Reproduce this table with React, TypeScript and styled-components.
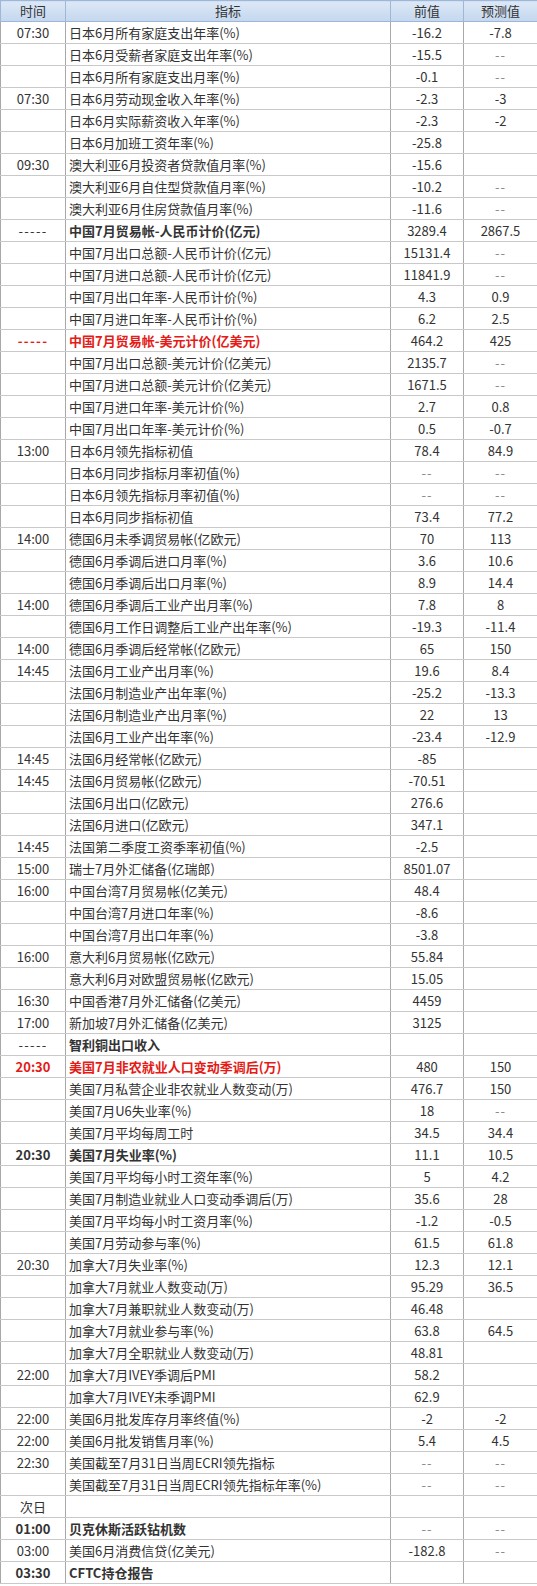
import React from "react";
import styled, { createGlobalStyle, css } from "styled-components";

const Global = createGlobalStyle`
  html, body { margin: 0; padding: 0; background: #fff; }
  body { font-family: "Noto Sans CJK SC", "Noto Sans", sans-serif; }
`;

type Tone = "normal" | "bold" | "red";
type Row = {
  t: string;
  n: string;
  p: string;
  f: string;
  tt?: Tone; // time tone
  nt?: Tone; // name tone
};

const rows: Row[] = [
  { t: "07:30", n: "日本6月所有家庭支出年率(%)", p: "-16.2", f: "-7.8" },
  { t: "", n: "日本6月受薪者家庭支出年率(%)", p: "-15.5", f: "--" },
  { t: "", n: "日本6月所有家庭支出月率(%)", p: "-0.1", f: "--" },
  { t: "07:30", n: "日本6月劳动现金收入年率(%)", p: "-2.3", f: "-3" },
  { t: "", n: "日本6月实际薪资收入年率(%)", p: "-2.3", f: "-2" },
  { t: "", n: "日本6月加班工资年率(%)", p: "-25.8", f: "" },
  { t: "09:30", n: "澳大利亚6月投资者贷款值月率(%)", p: "-15.6", f: "" },
  { t: "", n: "澳大利亚6月自住型贷款值月率(%)", p: "-10.2", f: "--" },
  { t: "", n: "澳大利亚6月住房贷款值月率(%)", p: "-11.6", f: "--" },
  { t: "-----", n: "中国7月贸易帐-人民币计价(亿元)", p: "3289.4", f: "2867.5", nt: "bold" },
  { t: "", n: "中国7月出口总额-人民币计价(亿元)", p: "15131.4", f: "--" },
  { t: "", n: "中国7月进口总额-人民币计价(亿元)", p: "11841.9", f: "--" },
  { t: "", n: "中国7月出口年率-人民币计价(%)", p: "4.3", f: "0.9" },
  { t: "", n: "中国7月进口年率-人民币计价(%)", p: "6.2", f: "2.5" },
  { t: "-----", n: "中国7月贸易帐-美元计价(亿美元)", p: "464.2", f: "425", tt: "red", nt: "red" },
  { t: "", n: "中国7月出口总额-美元计价(亿美元)", p: "2135.7", f: "--" },
  { t: "", n: "中国7月进口总额-美元计价(亿美元)", p: "1671.5", f: "--" },
  { t: "", n: "中国7月进口年率-美元计价(%)", p: "2.7", f: "0.8" },
  { t: "", n: "中国7月出口年率-美元计价(%)", p: "0.5", f: "-0.7" },
  { t: "13:00", n: "日本6月领先指标初值", p: "78.4", f: "84.9" },
  { t: "", n: "日本6月同步指标月率初值(%)", p: "--", f: "--" },
  { t: "", n: "日本6月领先指标月率初值(%)", p: "--", f: "--" },
  { t: "", n: "日本6月同步指标初值", p: "73.4", f: "77.2" },
  { t: "14:00", n: "德国6月未季调贸易帐(亿欧元)", p: "70", f: "113" },
  { t: "", n: "德国6月季调后进口月率(%)", p: "3.6", f: "10.6" },
  { t: "", n: "德国6月季调后出口月率(%)", p: "8.9", f: "14.4" },
  { t: "14:00", n: "德国6月季调后工业产出月率(%)", p: "7.8", f: "8" },
  { t: "", n: "德国6月工作日调整后工业产出年率(%)", p: "-19.3", f: "-11.4" },
  { t: "14:00", n: "德国6月季调后经常帐(亿欧元)", p: "65", f: "150" },
  { t: "14:45", n: "法国6月工业产出月率(%)", p: "19.6", f: "8.4" },
  { t: "", n: "法国6月制造业产出年率(%)", p: "-25.2", f: "-13.3" },
  { t: "", n: "法国6月制造业产出月率(%)", p: "22", f: "13" },
  { t: "", n: "法国6月工业产出年率(%)", p: "-23.4", f: "-12.9" },
  { t: "14:45", n: "法国6月经常帐(亿欧元)", p: "-85", f: "" },
  { t: "14:45", n: "法国6月贸易帐(亿欧元)", p: "-70.51", f: "" },
  { t: "", n: "法国6月出口(亿欧元)", p: "276.6", f: "" },
  { t: "", n: "法国6月进口(亿欧元)", p: "347.1", f: "" },
  { t: "14:45", n: "法国第二季度工资季率初值(%)", p: "-2.5", f: "" },
  { t: "15:00", n: "瑞士7月外汇储备(亿瑞郎)", p: "8501.07", f: "" },
  { t: "16:00", n: "中国台湾7月贸易帐(亿美元)", p: "48.4", f: "" },
  { t: "", n: "中国台湾7月进口年率(%)", p: "-8.6", f: "" },
  { t: "", n: "中国台湾7月出口年率(%)", p: "-3.8", f: "" },
  { t: "16:00", n: "意大利6月贸易帐(亿欧元)", p: "55.84", f: "" },
  { t: "", n: "意大利6月对欧盟贸易帐(亿欧元)", p: "15.05", f: "" },
  { t: "16:30", n: "中国香港7月外汇储备(亿美元)", p: "4459", f: "" },
  { t: "17:00", n: "新加坡7月外汇储备(亿美元)", p: "3125", f: "" },
  { t: "-----", n: "智利铜出口收入", p: "", f: "", nt: "bold" },
  { t: "20:30", n: "美国7月非农就业人口变动季调后(万)", p: "480", f: "150", tt: "red", nt: "red" },
  { t: "", n: "美国7月私营企业非农就业人数变动(万)", p: "476.7", f: "150" },
  { t: "", n: "美国7月U6失业率(%)", p: "18", f: "--" },
  { t: "", n: "美国7月平均每周工时", p: "34.5", f: "34.4" },
  { t: "20:30", n: "美国7月失业率(%)", p: "11.1", f: "10.5", tt: "bold", nt: "bold" },
  { t: "", n: "美国7月平均每小时工资年率(%)", p: "5", f: "4.2" },
  { t: "", n: "美国7月制造业就业人口变动季调后(万)", p: "35.6", f: "28" },
  { t: "", n: "美国7月平均每小时工资月率(%)", p: "-1.2", f: "-0.5" },
  { t: "", n: "美国7月劳动参与率(%)", p: "61.5", f: "61.8" },
  { t: "20:30", n: "加拿大7月失业率(%)", p: "12.3", f: "12.1" },
  { t: "", n: "加拿大7月就业人数变动(万)", p: "95.29", f: "36.5" },
  { t: "", n: "加拿大7月兼职就业人数变动(万)", p: "46.48", f: "" },
  { t: "", n: "加拿大7月就业参与率(%)", p: "63.8", f: "64.5" },
  { t: "", n: "加拿大7月全职就业人数变动(万)", p: "48.81", f: "" },
  { t: "22:00", n: "加拿大7月IVEY季调后PMI", p: "58.2", f: "" },
  { t: "", n: "加拿大7月IVEY未季调PMI", p: "62.9", f: "" },
  { t: "22:00", n: "美国6月批发库存月率终值(%)", p: "-2", f: "-2" },
  { t: "22:00", n: "美国6月批发销售月率(%)", p: "5.4", f: "4.5" },
  { t: "22:30", n: "美国截至7月31日当周ECRI领先指标", p: "--", f: "--" },
  { t: "", n: "美国截至7月31日当周ECRI领先指标年率(%)", p: "--", f: "--" },
  { t: "次日", n: "", p: "", f: "" },
  { t: "01:00", n: "贝克休斯活跃钻机数", p: "--", f: "--", tt: "bold", nt: "bold" },
  { t: "03:00", n: "美国6月消费信贷(亿美元)", p: "-182.8", f: "--" },
  { t: "03:30", n: "CFTC持仓报告", p: "", f: "", tt: "bold", nt: "bold" },
];

const toneCss = (tone?: Tone) => {
  if (tone === "bold") return css`font-weight: 700; color: #333;`;
  if (tone === "red") return css`font-weight: 700; color: #e41b17;`;
  return css`font-weight: 400;`;
};

const Table = styled.table`
  width: 537px;
  table-layout: fixed;
  border-collapse: collapse;
  font-size: 13px;
  color: #333;
`;

const HeadCell = styled.th`
  height: 20px;
  padding: 0;
  font-weight: 400;
  font-size: 13px;
  line-height: 20px;
  color: #333;
  text-align: center;
  background: linear-gradient(#dce8f6, #c4d7ef);
  border: 1px solid #9fb7d6;
`;

const Cell = styled.td<{ $align?: "left" | "center"; $tone?: Tone; $dim?: boolean; $dash?: boolean }>`
  height: 21px;
  padding: 0 ${(p) => (p.$align === "left" ? "3px" : "0")};
  line-height: 21px;
  text-align: ${(p) => p.$align ?? "center"};
  white-space: nowrap;
  overflow: hidden;
  border-left: 1px solid #a8a8a8;
  border-right: 1px solid #a8a8a8;
  border-bottom: 1px solid #c9c9c9;
  color: ${(p) => (p.$dim ? "#8a8a8a" : "#333")};
  letter-spacing: ${(p) => (p.$dash ? "1.3px" : p.$dim ? "1px" : "0")};
  ${(p) => toneCss(p.$tone)}
`;

export default function App() {
  return (
    <>
      <Global />
      <Table>
        <colgroup>
          <col style={{ width: 65 }} />
          <col style={{ width: 325 }} />
          <col style={{ width: 73 }} />
          <col style={{ width: 74 }} />
        </colgroup>
        <thead>
          <tr>
            <HeadCell>时间</HeadCell>
            <HeadCell>指标</HeadCell>
            <HeadCell>前值</HeadCell>
            <HeadCell>预测值</HeadCell>
          </tr>
        </thead>
        <tbody>
          {rows.map((r, i) => (
            <tr key={i}>
              <Cell $tone={r.tt} $dash={r.t === "-----"}>{r.t}</Cell>
              <Cell $align="left" $tone={r.nt}>{r.n}</Cell>
              <Cell $dim={r.p === "--"}>{r.p}</Cell>
              <Cell $dim={r.f === "--"}>{r.f}</Cell>
            </tr>
          ))}
        </tbody>
      </Table>
    </>
  );
}
